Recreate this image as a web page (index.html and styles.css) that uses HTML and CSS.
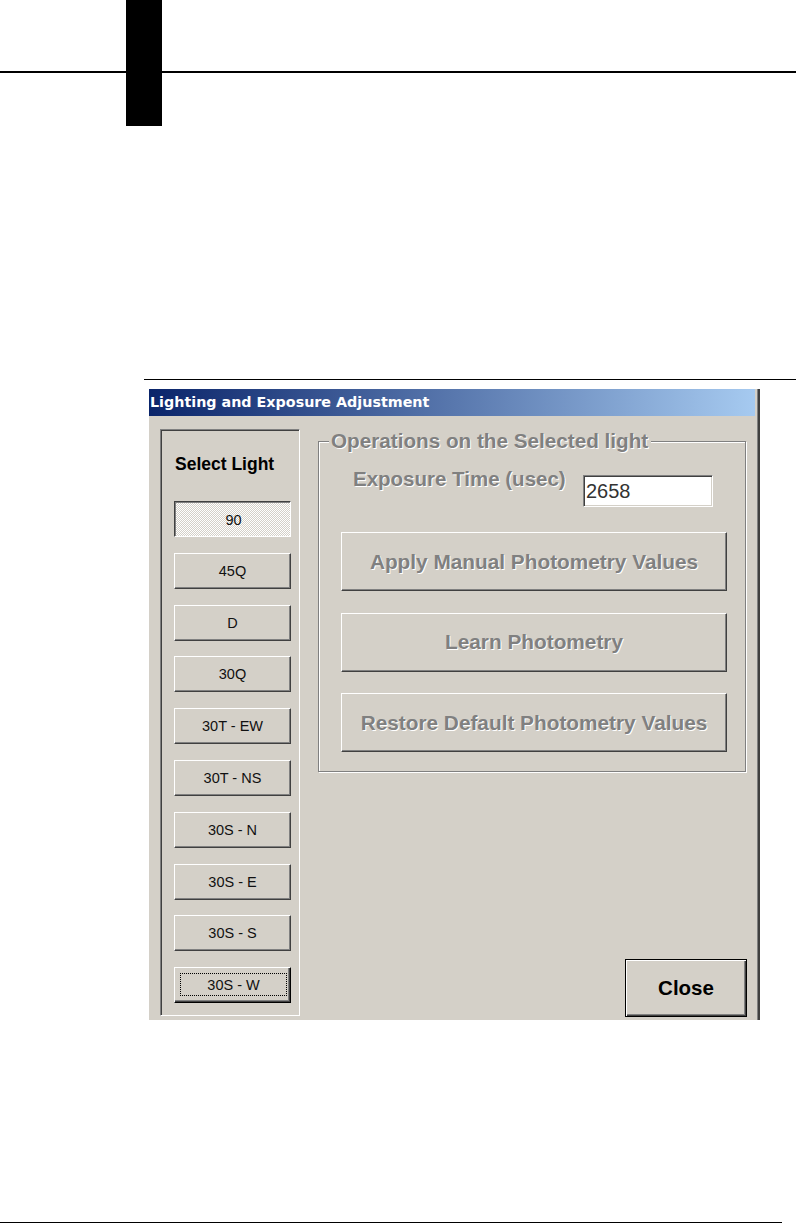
FILE: index.html
```html
<!DOCTYPE html>
<html>
<head>
<meta charset="utf-8">
<title>Lighting and Exposure Adjustment</title>
<link rel="stylesheet" href="styles.css">
</head>
<body>
<header class="page-head"><div class="thumb-tab"></div></header>
<div class="fig-rule"></div>
<div class="dialog">
  <div class="titlebar">Lighting and Exposure Adjustment</div>
  <div class="dlg-body">
    <div class="light-panel">
      <div class="panel-title">Select Light</div>
      <div class="light-list">
        <button class="btn light-btn is-selected">90</button>
        <button class="btn light-btn">45Q</button>
        <button class="btn light-btn">D</button>
        <button class="btn light-btn">30Q</button>
        <button class="btn light-btn">30T - EW</button>
        <button class="btn light-btn">30T - NS</button>
        <button class="btn light-btn">30S - N</button>
        <button class="btn light-btn">30S - E</button>
        <button class="btn light-btn">30S - S</button>
        <button class="btn light-btn is-default"><span class="focus">30S - W</span></button>
      </div>
    </div>
    <div class="ops-col">
      <fieldset class="ops-group">
        <legend class="ops-legend">Operations on the Selected light</legend>
        <div class="ops-inner">
          <div class="exp-row">
            <span class="exp-label">Exposure Time (usec)</span>
            <div class="exp-input">2658</div>
          </div>
          <div class="ops-buttons">
            <button class="btn big-btn" disabled>Apply Manual Photometry Values</button>
            <button class="btn big-btn" disabled>Learn Photometry</button>
            <button class="btn big-btn" disabled>Restore Default Photometry Values</button>
          </div>
        </div>
      </fieldset>
      <button class="btn close-btn">Close</button>
    </div>
  </div>
</div>
<div class="page-foot"></div>
</body>
</html>
```
FILE: styles.css
```css
html, body {
  margin: 0;
  padding: 0;
  background: #fff;
}
body {
  width: 796px;
  font-family: "Liberation Sans", Arial, sans-serif;
}
.page-head {
  height: 126px;
  background: linear-gradient(#000, #000) 0 71px / 100% 2px no-repeat;
}
.thumb-tab {
  margin-left: 126px;
  width: 36px;
  height: 126px;
  background: #000;
}
.fig-rule {
  margin: 253px 0 0 144px;
  height: 1px;
  background: #000;
}
.dialog {
  margin: 9px 0 0 148px;
  width: 612px;
  box-sizing: border-box;
  border-left: 1px solid #fff;
  border-right: 2px solid #404040;
  box-shadow: inset -1px 0 0 #808080;
  background: #d4d0c8;
}
.titlebar {
  height: 27px;
  line-height: 27px;
  margin-right: 3px;
  padding-left: 1px;
  background: linear-gradient(90deg, #0a246a, #a6caf0);
  color: #fff;
  font-family: "DejaVu Sans", sans-serif;
  font-weight: bold;
  font-size: 14.3px;
  white-space: nowrap;
}
.dlg-body {
  height: 604px;
  box-sizing: border-box;
  padding: 13px 11px 4px 11px;
  display: flex;
}
.light-panel {
  width: 140px;
  flex: none;
  box-sizing: border-box;
  border: 1px solid;
  border-color: #808080 #fff #fff #808080;
  box-shadow: inset 1px 1px 0 #404040, inset -1px -1px 0 #d4d0c8;
  padding: 24px 0 0 13px;
}
.panel-title {
  font-weight: bold;
  font-size: 17.5px;
  line-height: 20px;
  margin-left: 1px;
  color: #000;
}
.light-list {
  display: flex;
  flex-direction: column;
  gap: 15.8px;
  margin-top: 27px;
}
.btn {
  font-family: "Liberation Sans", Arial, sans-serif;
  background: #d4d0c8;
  border: 1px solid;
  border-color: #fff #404040 #404040 #fff;
  box-shadow: inset -1px -1px 0 #808080;
  border-radius: 0;
  padding: 0;
  margin: 0;
  color: #000;
  display: flex;
  align-items: center;
  justify-content: center;
  box-sizing: border-box;
  white-space: nowrap;
}
.light-btn {
  width: 117px;
  height: 36px;
  font-size: 14.5px;
  color: #111;
}
.light-btn.is-selected {
  border-color: #404040 #fff #fff #404040;
  box-shadow: inset 1px 1px 0 #808080;
  background: repeating-conic-gradient(#fff 0 25%, #d4d0c8 0 50%) 0 0 / 2px 2px;
  padding: 2px 0 0 2px;
}
.light-btn.is-default {
  border-color: #fff #000 #000 #fff;
  box-shadow: inset -1px -1px 0 #404040, inset -2px -2px 0 #808080;
  padding: 5px 3px 6px 5px;
}
.focus {
  flex: 1;
  align-self: stretch;
  display: flex;
  align-items: center;
  justify-content: center;
  border: 1px dotted #000;
}
.ops-col {
  flex: 1;
  margin-left: 18px;
  display: flex;
  flex-direction: column;
}
.ops-group {
  width: 428px;
  box-sizing: border-box;
  margin: 0;
  padding: 0 18px 19px 10px;
  min-width: 0;
  border: 1px solid #808080;
  box-shadow: inset 1px 1px 0 #fff, 1px 1px 0 #fff;
}
.ops-legend {
  padding: 0 3px 0 2px;
  margin: 0;
  font-weight: bold;
  font-size: 20.7px;
  line-height: 24px;
  color: #808080;
  text-shadow: 1px 1px 0 #fff;
  background: #d4d0c8;
}
.ops-inner {
  padding-left: 12px;
}
.exp-row {
  display: flex;
  align-items: flex-start;
  margin-top: 14px;
}
.exp-label {
  margin-left: 12px;
  font-weight: bold;
  font-size: 20.5px;
  line-height: 24px;
  color: #808080;
  text-shadow: 1px 1px 0 #fff;
  white-space: nowrap;
}
.exp-input {
  margin: 8px 14px 0 auto;
  width: 130px;
  height: 32px;
  box-sizing: border-box;
  background: #fff;
  border: 1px solid;
  border-color: #808080 #fff #fff #808080;
  box-shadow: inset 1px 1px 0 #404040, inset -1px -1px 0 #d4d0c8;
  font-size: 20px;
  line-height: 30px;
  padding-left: 2px;
  color: #333;
}
.ops-buttons {
  display: flex;
  flex-direction: column;
  gap: 21.5px;
  margin-top: 25px;
}
.big-btn {
  height: 59px;
  width: 100%;
  font-size: 20.8px;
  font-weight: bold;
  color: #808080;
  text-shadow: 1px 1px 0 #fff;
}
.close-btn {
  margin-top: auto;
  margin-bottom: -1px;
  align-self: flex-end;
  width: 122px;
  height: 58px;
  border: 1px solid #000;
  box-shadow: inset 1px 1px 0 #fff, inset -1px -1px 0 #404040, inset -2px -2px 0 #808080;
  font-size: 20.5px;
  font-weight: bold;
}
.page-foot {
  margin-top: 202px;
  width: 782px;
  height: 1px;
  background: #000;
}
```
